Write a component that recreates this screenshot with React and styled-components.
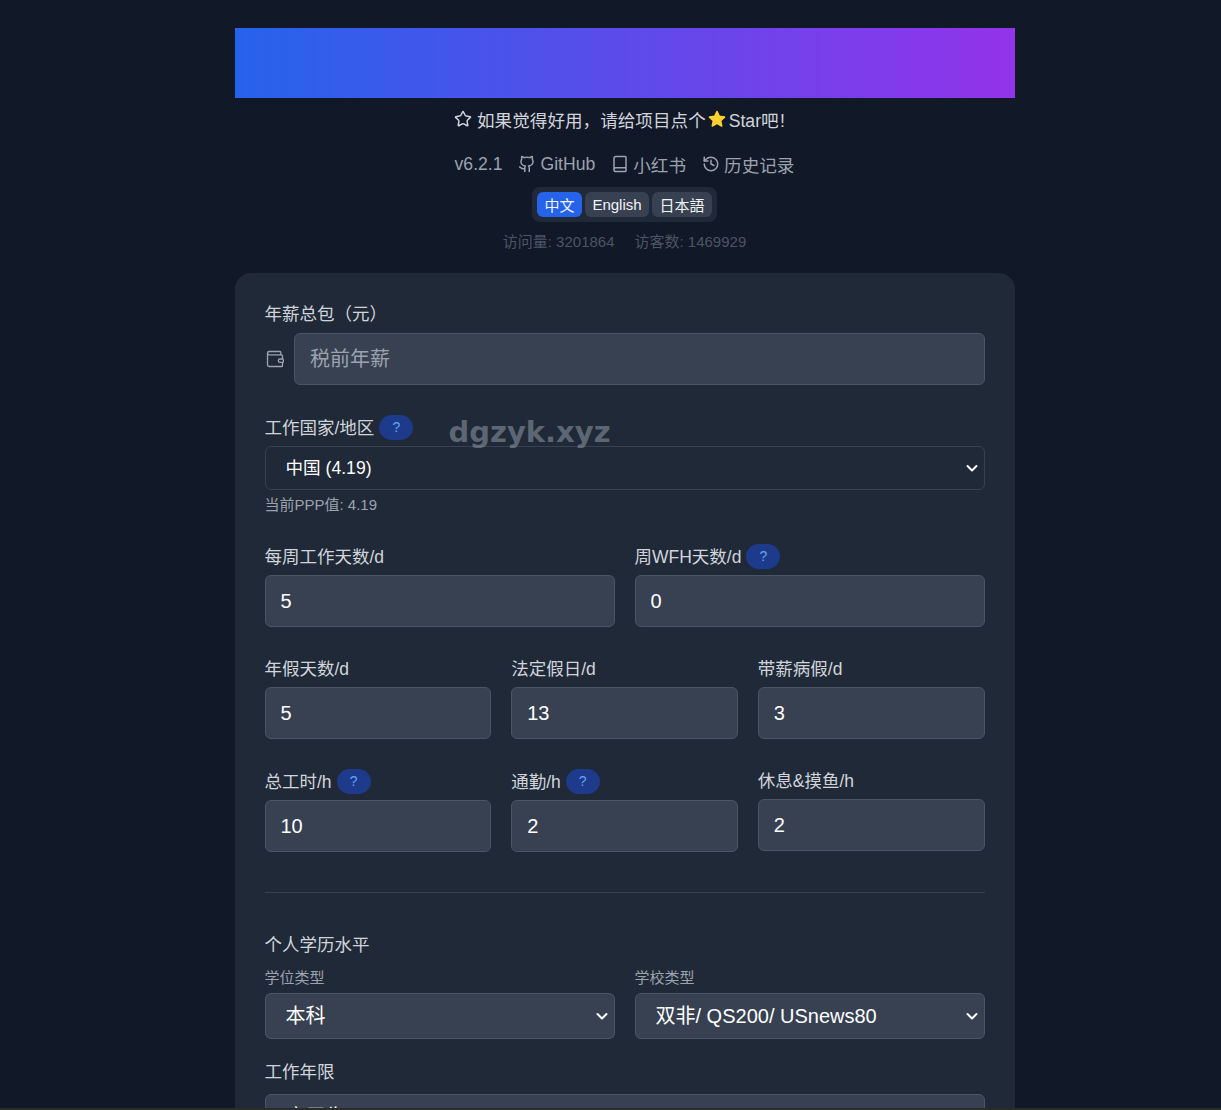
import React from "react"
import styled, { createGlobalStyle } from "styled-components"
import { Star, Github, Book, History, Wallet } from "lucide-react"

const FONT = `"Liberation Sans", "Noto Sans CJK SC", sans-serif`

const CHEVRON = `url("data:image/svg+xml,%3Csvg xmlns='http://www.w3.org/2000/svg' width='12' height='12' viewBox='0 0 12 12'%3E%3Cpath d='M1.5 4l4.5 4.5L10.500 4' fill='none' stroke='white' stroke-width='2' stroke-linecap='round' stroke-linejoin='round'/%3E%3C/svg%3E")`

const GlobalStyle = createGlobalStyle`
  html, body {
    margin: 0;
    height: 1110px;
    overflow: hidden;
    background: #111827;
    font-family: ${FONT};
  }
  * {
    box-sizing: border-box;
  }
`

const Page = styled.div`
  width: 780px;
  margin-left: 234.5px;
  padding-top: 28px;
  position: relative;
`

const Banner = styled.div`
  height: 70px;
  background: linear-gradient(90deg, #2563eb, #9333ea);
`

const Header = styled.header`
  display: flex;
  flex-direction: column;
  align-items: center;
`

const StarLine = styled.div`
  display: flex;
  align-items: center;
  height: 24px;
  margin-top: 9px;
  padding-right: 10px;
  font-size: 17.6px;
  color: #d1d5db;

  > svg:first-child {
    margin-right: 5px;
  }
`

const Emoji = styled.svg`
  margin: 0 2px 0 1px;
`

const Links = styled.nav`
  display: flex;
  align-items: center;
  gap: 16px;
  margin-top: 21px;
  height: 24px;
  font-size: 17.6px;
  color: #9ca3af;
`

const LinkItem = styled.span`
  display: flex;
  align-items: center;
  gap: 4px;
`

const LangSwitch = styled.div`
  display: flex;
  gap: 3px;
  margin-top: 11px;
  padding: 5px;
  border-radius: 8px;
  background: #1f2937;
`

const LangButton = styled.button`
  height: 25px;
  padding: 0 7.5px;
  border: 0;
  border-radius: 6px;
  font-family: ${FONT};
  font-size: 15px;
  color: #f3f4f6;
  background: ${props => (props.$active ? "#2563eb" : "#374151")};
`

const Stats = styled.div`
  display: flex;
  gap: 20px;
  margin-top: 10px;
  font-size: 15px;
  line-height: 20px;
  color: #4b5563;
`

const Card = styled.main`
  margin-top: 21px;
  padding: 28px 30px;
  height: 900px;
  border-radius: 16px;
  background: #1f2937;
`

const Field = styled.div`
  margin-top: ${props => (props.$nudge ? 1 : 0)}px;
`

const Label = styled.label`
  display: flex;
  align-items: center;
  height: 24px;
  margin-top: ${props => props.$mt || 0}px;
  margin-bottom: ${props => props.$mb || 6}px;
  font-size: 17.5px;
  color: #d1d5db;
`

const SubLabel = styled.label`
  display: block;
  height: 20px;
  margin-bottom: 5px;
  font-size: 15px;
  line-height: 20px;
  color: #9ca3af;
`

const Help = styled.span`
  display: inline-flex;
  flex: none;
  align-items: center;
  justify-content: center;
  width: 34px;
  height: 25px;
  margin: 2px 0 0 5px;
  border-radius: 13px;
  font-size: 14px;
  color: #60a5fa;
  background: #1e3a8a;
`

const IconRow = styled.div`
  display: flex;
  align-items: center;
  gap: 9.5px;
  color: #9ca3af;

  svg {
    flex: none;
  }
`

const Input = styled.input`
  display: block;
  width: 100%;
  height: 52px;
  padding: 0 15px;
  border: 1px solid #4b5563;
  border-radius: 6px;
  font-family: ${FONT};
  font-size: 20px;
  color: #fff;
  background: #374151;
  outline: none;

  &::placeholder {
    color: #9ca3af;
  }
`

const Select = styled.select`
  display: block;
  width: 100%;
  height: ${props => props.$h || 46}px;
  padding: 0 24px 0 20px;
  border: 1px solid ${props => (props.$dark ? "#374151" : "#4b5563")};
  border-radius: 6px;
  appearance: none;
  font-family: ${FONT};
  font-size: ${props => props.$size || 20}px;
  color: #fff;
  background: ${props => (props.$dark ? "#1f2937" : "#374151")} ${CHEVRON} no-repeat right 6px center;
  outline: none;
`

const Hint = styled.div`
  margin-top: 5px;
  font-size: 15px;
  line-height: 20px;
  color: #9ca3af;
`

const Grid = styled.div`
  display: grid;
  grid-template-columns: repeat(${props => props.$cols}, 1fr);
  gap: 20px;
  margin-top: ${props => props.$mt || 0}px;
`

const Divider = styled.hr`
  height: 1px;
  margin: 40px 0 0;
  border: 0;
  background: #374151;
`

const Watermark = styled.div`
  position: absolute;
  left: 214px;
  top: 414px;
  font-family: "DejaVu Sans", sans-serif;
  font-size: 29px;
  font-weight: 700;
  line-height: 36px;
  color: rgba(156, 163, 175, 0.5);
  pointer-events: none;
`

const BottomEdge = styled.div`
  position: fixed;
  left: 0;
  right: 0;
  bottom: 0;
  height: 2px;
  background: #2b2b2b;
`

const NumberField = ({ label, help, value, nudge }) => (
  <Field $nudge={nudge}>
    <Label $mt={-2} $mb={8}>
      {label}
      {help && <Help>?</Help>}
    </Label>
    <Input defaultValue={value} />
  </Field>
)

export default function App() {
  return (
    <>
      <GlobalStyle />
      <Page>
        <Banner />
        <Header>
          <StarLine>
            <Star size={18} />
            如果觉得好用，请给项目点个
            <Emoji width="20" height="20" viewBox="0 0 24 24">
              <path
                fill="#fbd02f"
                stroke="#fbd02f"
                strokeWidth="2"
                strokeLinejoin="round"
                d="M12 3l2.7 5.9 6.3.8-4.700 4.300 1.300 6.300L12 17.200l-5.600 3.100 1.300-6.300L3 9.700l6.300-.8z"
              />
            </Emoji>
            Star吧{"\u200a"}!
          </StarLine>
          <Links>
            <span>v6.2.1</span>
            <LinkItem>
              <Github size={18} />
              GitHub
            </LinkItem>
            <LinkItem>
              <Book size={18} />
              小红书
            </LinkItem>
            <LinkItem>
              <History size={18} />
              历史记录
            </LinkItem>
          </Links>
          <LangSwitch>
            <LangButton $active>中文</LangButton>
            <LangButton>English</LangButton>
            <LangButton>日本語</LangButton>
          </LangSwitch>
          <Stats>
            <span>访问量: 3201864</span>
            <span>访客数: 1469929</span>
          </Stats>
        </Header>
        <Card>
          <Field>
            <Label $mt={-1} $mb={9}>
              年薪总包（元）
            </Label>
            <IconRow>
              <Wallet size={20} strokeWidth={1.6} />
              <Input placeholder="税前年薪" />
            </IconRow>
          </Field>
          <Field>
            <Label $mt={29} $mb={8}>
              工作国家/地区
              <Help>?</Help>
            </Label>
            <Select $dark $h={44} $size={17.6} defaultValue="cn">
              <option value="cn">中国 (4.19)</option>
            </Select>
            <Hint>当前PPP值: 4.19</Hint>
          </Field>
          <Grid $cols={2} $mt={30}>
            <NumberField label="每周工作天数/d" value="5" />
            <NumberField label="周WFH天数/d" help value="0" />
          </Grid>
          <Grid $cols={3} $mt={30}>
            <NumberField label="年假天数/d" value="5" />
            <NumberField label="法定假日/d" value="13" />
            <NumberField label="带薪病假/d" value="3" />
          </Grid>
          <Grid $cols={3} $mt={30}>
            <NumberField label="总工时/h" help nudge value="10" />
            <NumberField label="通勤/h" help nudge value="2" />
            <NumberField label="休息&摸鱼/h" value="2" />
          </Grid>
          <Divider />
          <Label $mt={38} $mb={13}>
            个人学历水平
          </Label>
          <Grid $cols={2}>
            <Field>
              <SubLabel>学位类型</SubLabel>
              <Select defaultValue="b">
                <option value="b">本科</option>
              </Select>
            </Field>
            <Field>
              <SubLabel>学校类型</SubLabel>
              <Select defaultValue="q">
                <option value="q">双非/ QS200/ USnews80</option>
              </Select>
            </Field>
          </Grid>
          <Label $mt={19} $mb={12}>
            工作年限
          </Label>
          <Select defaultValue="y">
            <option value="y">应届生</option>
          </Select>
        </Card>
        <Watermark>dgzyk.xyz</Watermark>
      </Page>
      <BottomEdge />
    </>
  )
}
